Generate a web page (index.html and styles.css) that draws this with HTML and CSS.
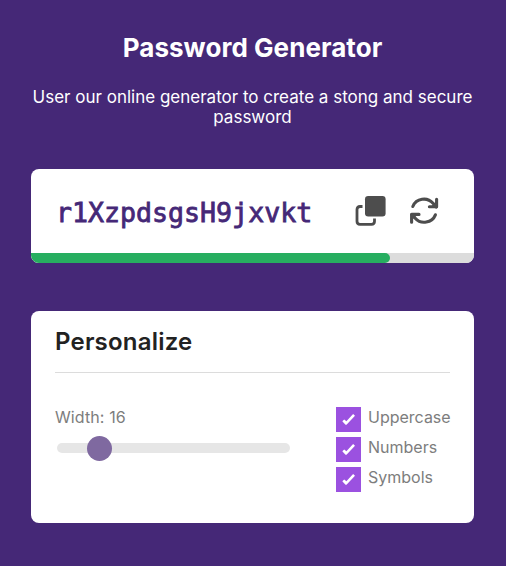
FILE: index.html
```html
<!DOCTYPE html>
<html lang="en">
<head>
<meta charset="utf-8">
<title>Password Generator</title>
<link rel="stylesheet" href="styles.css">
</head>
<body>
<main class="app">
  <header class="intro">
    <h1 class="title">Password Generator</h1>
    <p class="subtitle">User our online generator to create a stong and secure password</p>
  </header>
  <section class="card result">
    <div class="result-row">
      <span class="password">r1XzpdsgsH9jxvkt</span>
      <svg class="icon" viewBox="0 0 32 32" role="img" aria-label="Copy">
        <rect x="11" y="1" width="20.6" height="20.5" rx="3.2" fill="#4d4d4d"/>
        <path d="M8.5 11.5H6Q3 11.5 3 14.5V26.3Q3 29.3 6 29.3H17.5Q20.5 29.3 20.5 26.3V23.5" fill="none" stroke="#4d4d4d" stroke-width="2.8"/>
      </svg>
      <svg class="icon" viewBox="0 0 32 32" role="img" aria-label="Refresh">
        <g fill="none" stroke="#4d4d4d" stroke-width="3.1" stroke-linecap="round" stroke-linejoin="round">
          <path d="M4.8 11.5A12 11.8 0 0 1 25 8.3L28.2 12"/>
          <path d="M28.6 4.2V11.7H21.4"/>
          <path d="M27.4 19.8A12 11.8 0 0 1 7.2 23.2L3.8 19.7"/>
          <path d="M3.6 27.2V19.4H11"/>
        </g>
        <path d="M28.6 6V11.7H23Z M3.6 25.5V19.4H9.4Z" fill="#4d4d4d"/>
      </svg>
    </div>
    <div class="strength"><div class="strength-fill"></div></div>
  </section>
  <section class="card options">
    <h2 class="heading">Personalize</h2>
    <div class="settings">
      <div class="length">
        <label class="label">Width: 16</label>
        <div class="slider"><div class="thumb"></div></div>
      </div>
      <div class="checks">
        <label class="check"><span class="box"><svg viewBox="0 0 25 25"><path d="M6.3 14.2L8.2 12.5L10.4 14.2L17.1 7L19 8.7L10.5 17.8H9.5Z" fill="#fff"/></svg></span>Uppercase</label>
        <label class="check"><span class="box"><svg viewBox="0 0 25 25"><path d="M6.3 14.2L8.2 12.5L10.4 14.2L17.1 7L19 8.7L10.5 17.8H9.5Z" fill="#fff"/></svg></span>Numbers</label>
        <label class="check"><span class="box"><svg viewBox="0 0 25 25"><path d="M6.3 14.2L8.2 12.5L10.4 14.2L17.1 7L19 8.7L10.5 17.8H9.5Z" fill="#fff"/></svg></span>Symbols</label>
      </div>
    </div>
  </section>
</main>
</body>
</html>
```
FILE: styles.css
```css
* { box-sizing: border-box; }
html { background: #fff; }
body { margin: 0; font-family: Inter, sans-serif; }
h1, h2, p { margin: 0; }
.app {
  width: 506px;
  height: 566px;
  padding: 32px 32px 0 31px;
  background: #452877;
}
.intro { text-align: center; color: #fff; }
.title { font-size: 26px; line-height: 31px; font-weight: 700; letter-spacing: 0.05px; }
.subtitle { margin-top: 24px; font-size: 17px; line-height: 20px; color: #fff; }
.card { background: #fff; border-radius: 8px; overflow: hidden; }
.result { height: 94px; margin-top: 42px; }
.result-row { display: flex; align-items: center; height: 84px; padding-left: 25px; }
.password {
  width: 273px;
  margin-right: 25px;
  font-family: "DejaVu Sans Mono", monospace;
  font-size: 26.6px;
  line-height: 32px;
  padding-top: 3px;
  color: #452877;
  -webkit-text-stroke: 0.8px #452877;
}
.icon { width: 32px; height: 32px; margin-right: 22px; flex: none; }
.strength { height: 10px; background: #dcdcdc; }
.strength-fill { width: 359px; height: 10px; background: #27ae60; border-radius: 0 5px 5px 0; }
.options { height: 212px; margin-top: 48px; padding: 15px 24px; }
.heading {
  height: 47px;
  font-size: 24px;
  line-height: 31px;
  font-weight: 600;
  letter-spacing: 0.2px;
  color: #222;
  border-bottom: 1px solid #dcdcdc;
}
.settings { display: flex; justify-content: space-between; padding-top: 34px; }
.length { width: 237px; color: #7d7d7d; }
.label { display: block; font-size: 16px; line-height: 21px; letter-spacing: 0.1px; }
.slider { display: flex; align-items: center; height: 10px; width: 233px; margin: 15px 0 0 2px; padding-left: 30px; border-radius: 5px; background: #e6e6e6; }
.thumb { width: 25px; height: 25px; flex: none; border-radius: 50%; background: #7f69a0; }
.checks { display: flex; flex-direction: column; gap: 5px; width: 114px; }
.check { display: flex; height: 25px; gap: 7px; font-size: 16px; line-height: 21px; color: #7d7d7d; }
.box { width: 25px; height: 25px; background: #9b51e0; flex: none; }
.box svg { display: block; }
```
